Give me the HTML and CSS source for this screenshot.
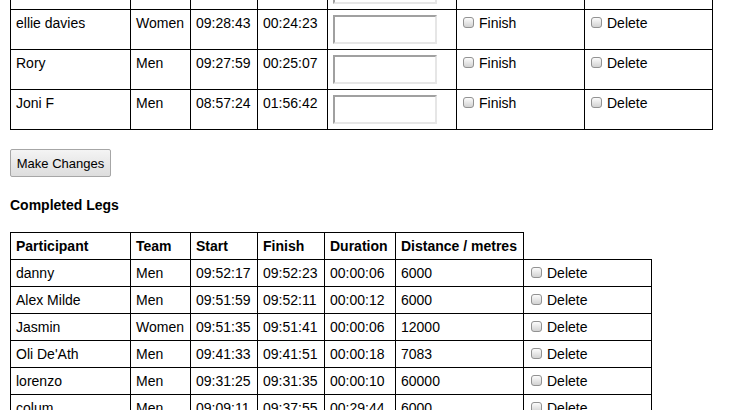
FILE: index.html
```html
<!DOCTYPE html>
<html>
<head>
<meta charset="utf-8">
<link rel="stylesheet" href="styles.css">
</head>
<body>
<div class="page">
  <form class="current">
    <table class="legs legs-current">
      <colgroup>
        <col class="c-name"><col class="c-team"><col class="c-start"><col class="c-dur"><col class="c-input"><col class="c-check"><col class="c-check">
      </colgroup>
      <tbody>
        <tr>
          <td>Sam P</td><td>Men</td><td>09:30:02</td><td>00:22:04</td>
          <td><input type="text" class="dist"></td>
          <td><label><input type="checkbox" class="cb">Finish</label></td>
          <td><label><input type="checkbox" class="cb">Delete</label></td>
        </tr>
        <tr>
          <td>ellie davies</td><td>Women</td><td>09:28:43</td><td>00:24:23</td>
          <td><input type="text" class="dist"></td>
          <td><label><input type="checkbox" class="cb">Finish</label></td>
          <td><label><input type="checkbox" class="cb">Delete</label></td>
        </tr>
        <tr>
          <td>Rory</td><td>Men</td><td>09:27:59</td><td>00:25:07</td>
          <td><input type="text" class="dist"></td>
          <td><label><input type="checkbox" class="cb">Finish</label></td>
          <td><label><input type="checkbox" class="cb">Delete</label></td>
        </tr>
        <tr>
          <td>Joni F</td><td>Men</td><td>08:57:24</td><td>01:56:42</td>
          <td><input type="text" class="dist"></td>
          <td><label><input type="checkbox" class="cb">Finish</label></td>
          <td><label><input type="checkbox" class="cb">Delete</label></td>
        </tr>
      </tbody>
    </table>
    <button type="button" class="btn">Make Changes</button>
  </form>

  <h3 class="section-title">Completed Legs</h3>

  <table class="legs legs-done">
    <colgroup>
      <col class="c-name"><col class="c-team"><col class="c-start"><col class="c-fin"><col class="c-dur2"><col class="c-check"><col class="c-check">
    </colgroup>
    <thead>
      <tr>
        <th>Participant</th><th>Team</th><th>Start</th><th>Finish</th><th>Duration</th><th>Distance / metres</th>
      </tr>
    </thead>
    <tbody>
      <tr><td>danny</td><td>Men</td><td>09:52:17</td><td>09:52:23</td><td>00:00:06</td><td>6000</td><td><label><input type="checkbox" class="cb">Delete</label></td></tr>
      <tr><td>Alex Milde</td><td>Men</td><td>09:51:59</td><td>09:52:11</td><td>00:00:12</td><td>6000</td><td><label><input type="checkbox" class="cb">Delete</label></td></tr>
      <tr><td>Jasmin</td><td>Women</td><td>09:51:35</td><td>09:51:41</td><td>00:00:06</td><td>12000</td><td><label><input type="checkbox" class="cb">Delete</label></td></tr>
      <tr><td>Oli De'Ath</td><td>Men</td><td>09:41:33</td><td>09:41:51</td><td>00:00:18</td><td>7083</td><td><label><input type="checkbox" class="cb">Delete</label></td></tr>
      <tr><td>lorenzo</td><td>Men</td><td>09:31:25</td><td>09:31:35</td><td>00:00:10</td><td>60000</td><td><label><input type="checkbox" class="cb">Delete</label></td></tr>
      <tr><td>colum</td><td>Men</td><td>09:09:11</td><td>09:37:55</td><td>00:29:44</td><td>6000</td><td><label><input type="checkbox" class="cb">Delete</label></td></tr>
    </tbody>
  </table>
</div>
</body>
</html>
```

FILE: styles.css
```css
html, body {
  margin: 0;
  padding: 0;
  background: #ffffff;
}

body {
  font-family: "Liberation Sans", Arial, sans-serif;
  font-size: 14px;
  line-height: 16px;
  color: #000000;
  overflow: hidden;
}

.page {
  padding: 0 10px;
}

.legs {
  border-collapse: collapse;
  table-layout: fixed;
}

.legs td,
.legs th {
  border: 1px solid #000000;
  padding: 5px;
  text-align: left;
  vertical-align: top;
  white-space: nowrap;
  line-height: 16px;
}

.legs th {
  font-weight: bold;
}

.legs-current {
  width: 703px;
  margin-top: -31px;
}

.legs-done {
  width: 642px;
}

.c-name { width: 120px; }
.c-team { width: 60px; }
.c-start { width: 67px; }
.c-dur { width: 70px; }
.c-fin { width: 67px; }
.c-dur2 { width: 71px; }
.c-input { width: 129px; }
.c-check { width: 128px; }

.dist {
  display: block;
  box-sizing: border-box;
  width: 104px;
  height: 29px;
  margin: 0;
  padding: 1px 2px;
  border: 2px solid;
  border-color: #a0a0a0 #e6e6e6 #e6e6e6 #a0a0a0;
  background: #ffffff;
  font: 13px "Liberation Sans", Arial, sans-serif;
}

.cb {
  -webkit-appearance: none;
  appearance: none;
  display: inline-block;
  box-sizing: border-box;
  width: 11px;
  height: 11px;
  margin: 0 5px 0 1px;
  padding: 0;
  border: 1px solid #929292;
  border-radius: 3px;
  background: linear-gradient(#fcfcfc, #d2d2d2);
  vertical-align: 0;
}

.legs-done .cb {
  margin-left: 2px;
}

.btn {
  display: block;
  box-sizing: border-box;
  width: 101px;
  height: 28px;
  margin: 19px 0 0 0;
  padding: 0;
  font: 13px "Liberation Sans", Arial, sans-serif;
  color: #000000;
  text-align: center;
  background: linear-gradient(#f4f4f4, #dddddd);
  border: 1px solid #a6a6a6;
  border-radius: 2px;
}

.section-title {
  margin: 20px 0 19px 0;
  font-size: 14px;
  line-height: 16px;
  font-weight: bold;
}
```
